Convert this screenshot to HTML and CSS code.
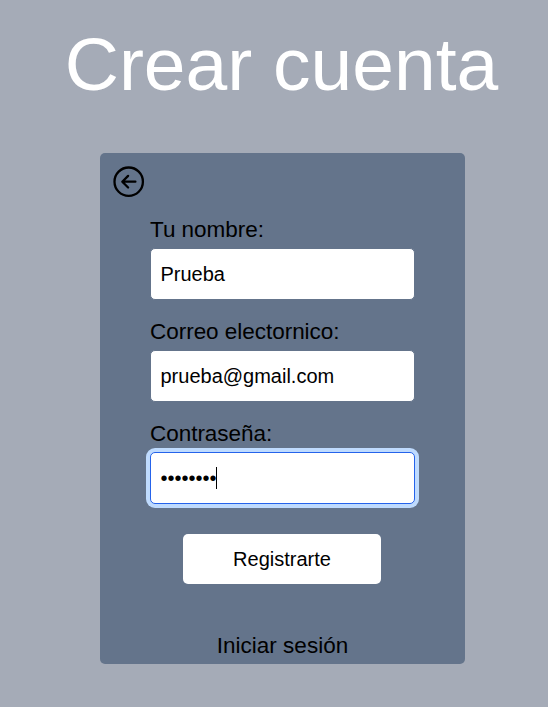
FILE: index.html
```html
<!DOCTYPE html>
<html lang="es">
<head>
  <meta charset="utf-8">
  <title>Crear cuenta</title>
  <link rel="stylesheet" href="styles.css">
</head>
<body>
  <h1 class="title">Crear cuenta</h1>
  <main class="card">
    <a class="back" aria-label="Volver">
      <svg viewBox="0 0 32 32" width="32" height="32" fill="none" stroke="#000" stroke-width="2.3" stroke-linecap="round" stroke-linejoin="round">
        <circle cx="15.7" cy="15.7" r="14.2"/>
        <path d="M22.4 15.7H9.4M15.1 9.9L9.3 15.7L15.1 21.5"/>
      </svg>
    </a>
    <form class="form">
      <div class="field">
        <span class="label">Tu nombre:</span>
        <div class="input">Prueba</div>
      </div>
      <div class="field">
        <span class="label">Correo electornico:</span>
        <div class="input">prueba@gmail.com</div>
      </div>
      <div class="field">
        <span class="label">Contraseña:</span>
        <div class="input focused">••••••••<span class="caret"></span></div>
      </div>
      <button class="submit" type="button">Registrarte</button>
    </form>
    <a class="login">Iniciar sesión</a>
  </main>
</body>
</html>
```
FILE: styles.css
```css
* {
  box-sizing: border-box;
}

body {
  margin: 0;
  height: 707px;
  overflow: hidden;
  background: #a5abb7;
  color: #000;
  font-family: "Liberation Sans", Arial, sans-serif;
  font-size: 20px;
}

.title {
  margin: 27px 0 51px 15px;
  color: #fff;
  font-size: 75px;
  font-weight: 400;
  line-height: 75px;
  text-align: center;
}

.card {
  display: flex;
  flex-direction: column;
  width: 365px;
  height: 511px;
  margin-left: 100px;
  padding: 13px 0 0;
  border-radius: 5px;
  background: #64748b;
}

.back {
  height: 32px;
  margin-left: 13px;
}

.back svg {
  display: block;
}

.form {
  display: flex;
  flex-direction: column;
  gap: 16px;
  width: 265px;
  margin: 14px auto 0;
}

.field {
  display: flex;
  flex-direction: column;
}

.label {
  height: 36px;
  font-size: 22.5px;
  line-height: 36px;
  letter-spacing: -0.03px;
}

.input {
  display: flex;
  align-items: center;
  height: 52px;
  padding: 0 9.5px;
  border: 1px solid #64748b;
  border-radius: 5px;
  background: #fff;
  line-height: 24px;
}

.field + .field {
  margin-top: -2px;
}

.focused {
  border-color: #2563eb;
  box-shadow: 0 0 0 4px #bfdbfe;
}

.caret {
  width: 1px;
  height: 22px;
  margin-left: -0.5px;
  background: #000;
}

.submit {
  align-self: center;
  width: 198px;
  height: 50px;
  margin: 14px 1px 0 0;
  padding: 0;
  border: 0;
  border-radius: 5px;
  background: #fff;
  color: #000;
  font: inherit;
}

.login {
  margin-top: 44px;
  font-size: 22.5px;
  line-height: 36px;
  text-align: center;
}
```
